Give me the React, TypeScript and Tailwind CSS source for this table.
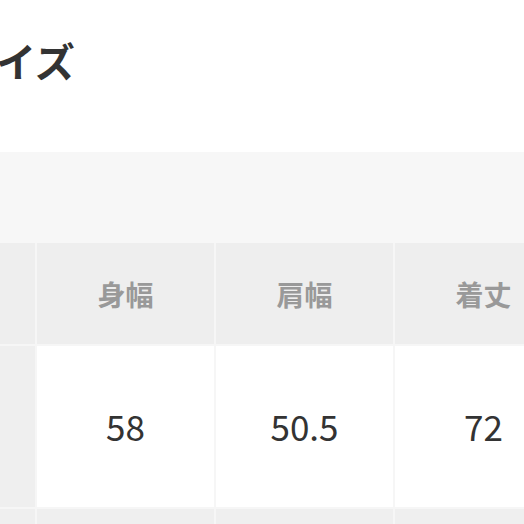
export default function App() {
  const font = { fontFamily: '"Noto Sans CJK JP", "Noto Sans", sans-serif' };
  return (
    <div className="w-[524px] h-[524px] overflow-hidden bg-white" style={font}>
      <div className="h-[152px] flex items-start pt-[36px]">
        <div className="ml-[-44px] text-[40px] leading-[48px] font-bold text-[#333333] whitespace-nowrap">サイズ</div>
      </div>
      <div className="h-[91px] bg-[#f7f7f7]" />
      <div className="grid grid-cols-[35px_177px_177px_177px] grid-rows-[101px_161px_40px] gap-[2px] bg-[#f6f6f6] w-[574px]">
        <div className="bg-[#eeeeee]" />
        <div className="bg-[#eeeeee] flex items-center justify-center text-[28px] font-bold text-[#999999]">身幅</div>
        <div className="bg-[#eeeeee] flex items-center justify-center text-[28px] font-bold text-[#999999]">肩幅</div>
        <div className="bg-[#eeeeee] flex items-center justify-center text-[28px] font-bold text-[#999999]">着丈</div>
        <div className="bg-[#efefef]" />
        <div className="bg-white flex items-center justify-center text-[35px] text-[#333333]">58</div>
        <div className="bg-white flex items-center justify-center text-[35px] text-[#333333]">50.5</div>
        <div className="bg-white flex items-center justify-center text-[35px] text-[#333333]">72</div>
        <div className="bg-[#efefef]" />
        <div className="bg-[#efefef]" />
        <div className="bg-[#efefef]" />
        <div className="bg-[#efefef]" />
      </div>
    </div>
  );
}
